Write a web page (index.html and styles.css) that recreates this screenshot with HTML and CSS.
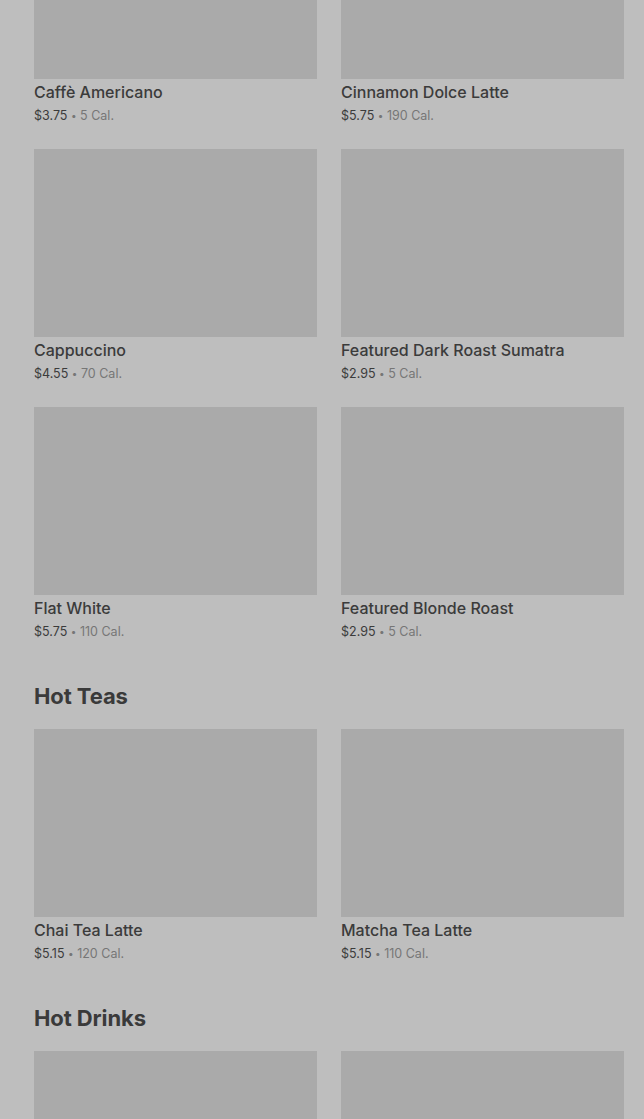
FILE: index.html
```html
<!DOCTYPE html>
<html lang="en">
<head>
<meta charset="utf-8">
<title>Menu</title>
<link rel="stylesheet" href="styles.css">
</head>
<body>
<main class="menu">
  <section class="section first">
    <div class="grid">
      <div class="item"><div class="thumb"></div><div class="name">Caffè Americano</div><div class="meta"><span class="price">$3.75</span> <span class="dot">•</span> 5 Cal.</div></div>
      <div class="item"><div class="thumb"></div><div class="name">Cinnamon Dolce Latte</div><div class="meta"><span class="price">$5.75</span> <span class="dot">•</span> 190 Cal.</div></div>
      <div class="item"><div class="thumb"></div><div class="name">Cappuccino</div><div class="meta"><span class="price">$4.55</span> <span class="dot">•</span> 70 Cal.</div></div>
      <div class="item"><div class="thumb"></div><div class="name">Featured Dark Roast Sumatra</div><div class="meta"><span class="price">$2.95</span> <span class="dot">•</span> 5 Cal.</div></div>
      <div class="item"><div class="thumb"></div><div class="name">Flat White</div><div class="meta"><span class="price">$5.75</span> <span class="dot">•</span> 110 Cal.</div></div>
      <div class="item"><div class="thumb"></div><div class="name">Featured Blonde Roast</div><div class="meta"><span class="price">$2.95</span> <span class="dot">•</span> 5 Cal.</div></div>
    </div>
  </section>
  <section class="section">
    <h2 class="heading">Hot Teas</h2>
    <div class="grid">
      <div class="item"><div class="thumb"></div><div class="name">Chai Tea Latte</div><div class="meta"><span class="price">$5.15</span> <span class="dot">•</span> 120 Cal.</div></div>
      <div class="item"><div class="thumb"></div><div class="name">Matcha Tea Latte</div><div class="meta"><span class="price">$5.15</span> <span class="dot">•</span> 110 Cal.</div></div>
    </div>
  </section>
  <section class="section">
    <h2 class="heading">Hot Drinks</h2>
    <div class="grid">
      <div class="item"><div class="thumb"></div></div>
      <div class="item"><div class="thumb"></div></div>
    </div>
  </section>
</main>
</body>
</html>
```
FILE: styles.css
```css
html, body {
  margin: 0;
  padding: 0;
  background: #bebebe;
  height: 100%;
  overflow: hidden;
}
body {
  font-family: Inter, "Noto Sans", sans-serif;
  color: #3a3a3a;
}
.menu {
  padding: 0 20px 0 34px;
}
.section.first {
  margin-top: -109px;
}
.grid {
  display: grid;
  grid-template-columns: 283px 283px;
  column-gap: 24px;
  row-gap: 23px;
}
.thumb {
  height: 188px;
  background: #aaaaaa;
}
.name {
  margin-top: 1px;
  font-size: 16px;
  line-height: 24px;
  font-weight: 500;
  color: #3b3b3b;
  white-space: nowrap;
}
.meta {
  margin-top: 2px;
  height: 20px;
  font-size: 12.5px;
  line-height: 20px;
  color: #767676;
  white-space: nowrap;
}
.price {
  color: #3b3b3b;
}
.dot {
  font-size: 10px;
  line-height: 1;
  vertical-align: 1px;
}
.heading {
  margin: 40px 0 19px;
  font-size: 22px;
  line-height: 28px;
  font-weight: 700;
  letter-spacing: -0.1px;
  color: #3a3a3a;
}
```
